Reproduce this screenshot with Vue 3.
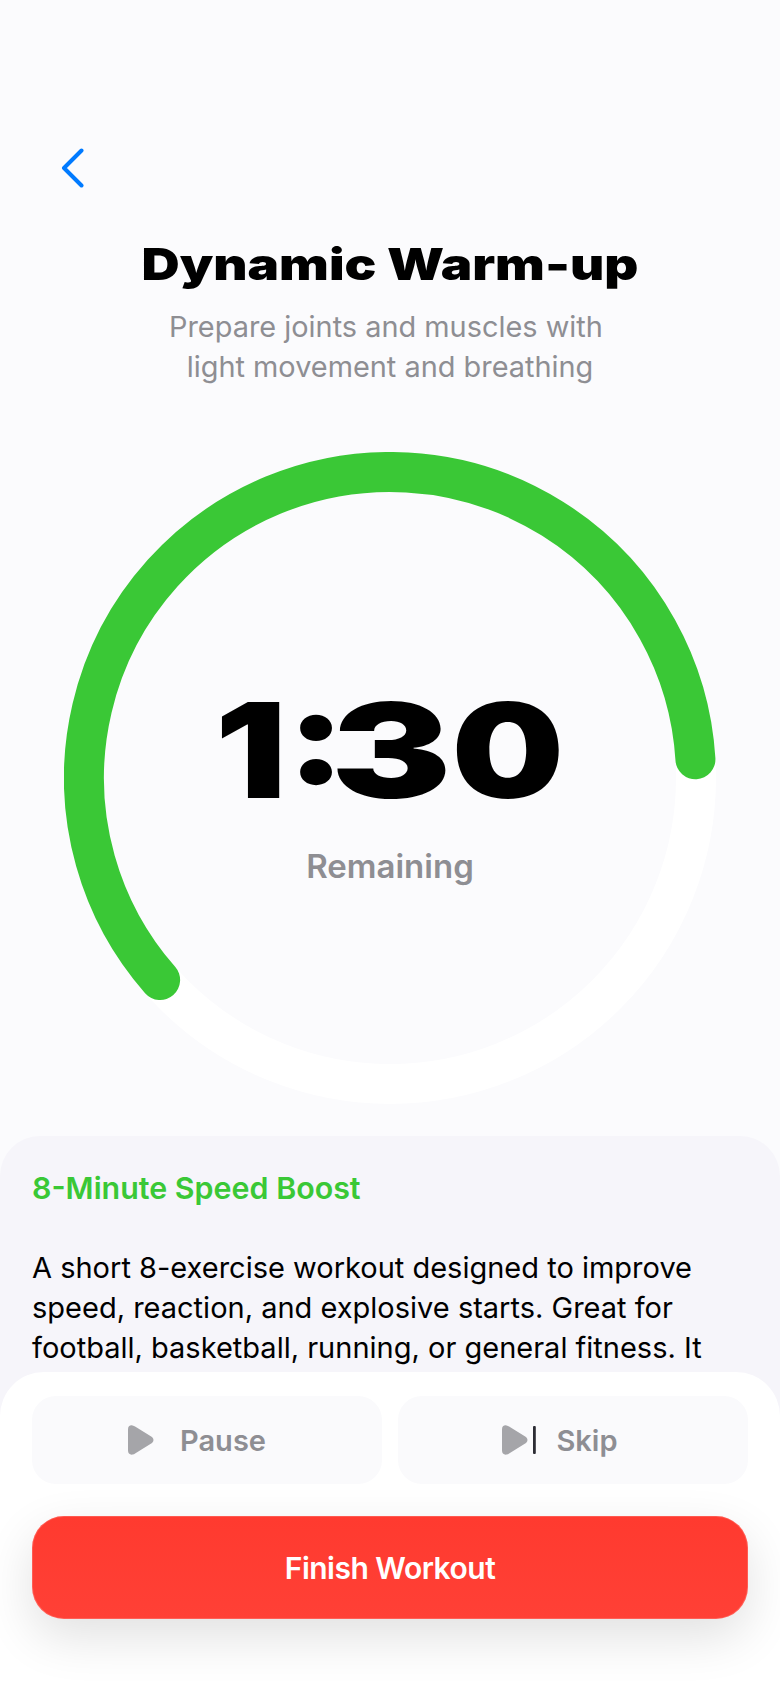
<template>
  <div class="screen">
    <header class="top">
      <button class="back" aria-label="Back">
        <svg width="24" height="40" viewBox="0 0 24 40" fill="none">
          <path d="M21.5 2.5 L4 20 L21.5 37.5" stroke="#007aff" stroke-width="4" stroke-linecap="round" stroke-linejoin="round" />
        </svg>
      </button>
      <h1 class="title"><span>Dynamic Warm-up</span></h1>
      <p class="subtitle">Prepare joints and muscles with <br />light movement and breathing</p>
    </header>

    <section class="timer">
      <svg class="ring" width="652" height="652" viewBox="0 0 652 652" fill="none">
        <circle cx="326" cy="326" :r="radius" stroke="#ffffff" stroke-width="40" />
        <path :d="arcPath" stroke="#3ac836" stroke-width="40" stroke-linecap="round" />
      </svg>
      <div class="readout">
        <div class="time"><span class="digits">1<span class="colon">:</span><span class="three">3</span>0</span></div>
        <div class="remaining">Remaining</div>
      </div>
    </section>

    <section class="info">
      <h2 class="info-title">8-Minute Speed Boost</h2>
      <p class="info-text">A short 8-exercise workout designed to improve speed, reaction, and explosive starts. Great for football, basketball, running, or general fitness. It</p>
    </section>

    <footer class="actions">
      <div class="row">
        <button class="ghost pause">
          <svg width="26" height="30" viewBox="0 0 26 30">
            <path d="M0 4.5 Q0 0 4.5 0.4 Q6 0.6 7.5 1.8 L24 12 Q27 15 24 18 L7.5 28.2 Q6 29.4 4.5 29.6 Q0 30 0 25.5 Z" fill="#a5a5a9" />
          </svg>
          <span>Pause</span>
        </button>
        <button class="ghost skip">
          <svg width="34" height="30" viewBox="0 0 34 30">
            <path d="M0 4.5 Q0 0 4.5 0.4 Q6 0.6 7.5 1.8 L24 12 Q27 15 24 18 L7.5 28.2 Q6 29.4 4.5 29.6 Q0 30 0 25.5 Z" fill="#a5a5a9" />
            <rect x="31" y="1" width="2.8" height="28" rx="1" fill="#2c2c34" />
          </svg>
          <span>Skip</span>
        </button>
      </div>
      <button class="finish">Finish Workout</button>
    </footer>
  </div>
</template>

<script setup>
const radius = 306
const center = 326

function pointAt(deg) {
  const a = (deg * Math.PI) / 180
  return [center + radius * Math.sin(a), center - radius * Math.cos(a)]
}

// green runs from lower left, over the top, to just above 3 o'clock
const [sx, sy] = pointAt(228.7)
const [ex, ey] = pointAt(86.5)
const arcPath = `M ${sx} ${sy} A ${radius} ${radius} 0 1 1 ${ex} ${ey}`
</script>

<style>
html,
body {
  margin: 0;
  background: #fbfbfd;
}
</style>

<style scoped>
* {
  box-sizing: border-box;
  margin: 0;
  padding: 0;
}

.screen {
  position: relative;
  width: 780px;
  height: 1688px;
  overflow: hidden;
  background: #fbfbfd;
  font-family: Inter, 'Liberation Sans', sans-serif;
  color: #000;
}

button {
  border: 0;
  background: none;
  font-family: inherit;
}

.top {
  padding: 148px 32px 0;
  text-align: center;
}

.back {
  display: block;
  margin-left: 28px;
  height: 40px;
}

.title {
  margin-top: 48px;
  font-size: 44px;
  line-height: 56px;
  font-weight: 900;
}

.title span {
  display: inline-block;
  transform: scaleX(1.2);
}

.subtitle {
  margin-top: 15px;
  font-size: 28.9px;
  line-height: 40px;
  color: #8e8e93;
  white-space: pre;
}

.timer {
  position: relative;
  height: 652px;
  margin-top: 65px;
  display: flex;
  justify-content: center;
}

.ring {
  position: absolute;
  top: 0;
  left: 64px;
}

.readout {
  z-index: 1;
  margin-top: 218px;
  text-align: center;
}

.time {
  font-size: 132px;
  line-height: 160px;
  font-weight: 900;
}

.digits {
  display: inline-block;
  transform: scaleX(1.2);
}

.colon {
  letter-spacing: -13px;
  font-feature-settings: 'case' 1;
}

.three {
  display: inline-block;
  margin-left: 13px;
  transform: scaleX(1.14);
  transform-origin: right center;
}

.remaining {
  margin-top: 16px;
  font-size: 33px;
  line-height: 40px;
  font-weight: 600;
  color: #8e8e93;
}

.info {
  height: 300px;
  margin-top: 32px;
  padding: 32px 32px 0;
  background: #f6f5fa;
  border-radius: 40px 40px 0 0;
}

.info-title {
  font-size: 30.4px;
  line-height: 40px;
  font-weight: 600;
  color: #3ac836;
}

.info-text {
  margin-top: 40px;
  font-size: 29px;
  line-height: 40px;
}

.actions {
  position: absolute;
  left: 0;
  right: 0;
  bottom: 0;
  height: 316px;
  padding: 24px 32px 0;
  background: #fff;
  border-radius: 44px 44px 0 0;
}

.row {
  display: grid;
  grid-template-columns: 1fr 1fr;
  gap: 16px;
}

.ghost {
  height: 88px;
  display: flex;
  align-items: center;
  justify-content: center;
  gap: 26px;
  border-radius: 24px;
  background: #fafafc;
  font-size: 29px;
  font-weight: 600;
  color: #8e8e93;
}

.pause {
  padding-right: 20px;
}

.skip {
  gap: 20px;
  padding-right: 26px;
}

.finish {
  display: block;
  width: 100%;
  height: 103px;
  margin-top: 32px;
  border-radius: 32px;
  background: linear-gradient(#ff3a2f, #ff4036);
  box-shadow: inset 0 0 0 1px rgba(255, 255, 255, 0.16), 0 18px 50px rgba(0, 0, 0, 0.12);
  color: #fff;
  font-size: 30px;
  font-weight: 600;
  letter-spacing: -0.5px;
}
</style>
